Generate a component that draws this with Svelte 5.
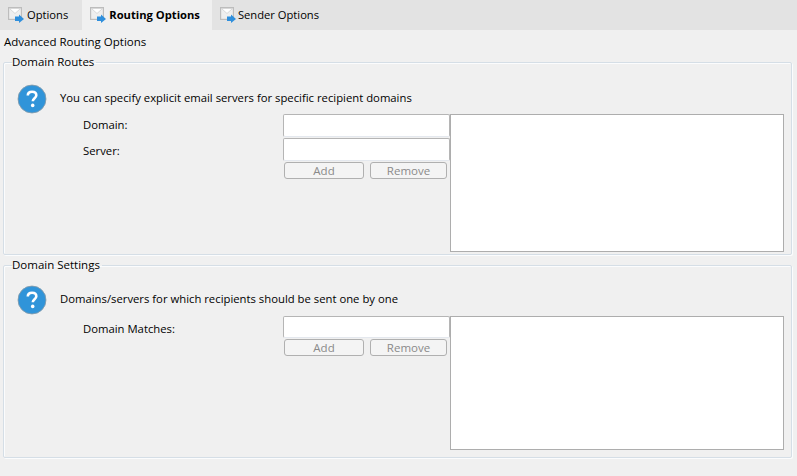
<script>
  const tabs = [
    { label: 'Options', active: false },
    { label: 'Routing Options', active: true },
    { label: 'Sender Options', active: false },
  ];

  const groups = [
    {
      title: 'Domain Routes',
      hint: 'You can specify explicit email servers for specific recipient domains',
      fields: ['Domain:', 'Server:'],
      compact: false,
    },
    {
      title: 'Domain Settings',
      hint: 'Domains/servers for which recipients should be sent one by one',
      fields: ['Domain Matches:'],
      compact: true,
    },
  ];
</script>

<div class="page">
  <nav class="tabs">
    {#each tabs as tab}
      <div class="tab" class:active={tab.active}>
        <svg class="tab-icon" width="18" height="18" viewBox="0 0 18 18">
          <rect x="0.6" y="2.6" width="12.8" height="11.8" fill="#efefef" stroke="#bdbdbd" stroke-width="1.2" />
          <path d="M1.5 3.5 L7 8.5 L12.5 3.5 Z" fill="#ffffff" stroke="#d0d0d0" stroke-width="0.8" />
          <path d="M7 11.5 H11 V9.5 L16 14 L11 18 V16 H7 Z" fill="#2f8fdc" />
        </svg>
        <span>{tab.label}</span>
      </div>
    {/each}
  </nav>

  <div class="heading">Advanced Routing Options</div>

  {#each groups as group}
    <fieldset class="group" class:compact={group.compact}>
      <legend>{group.title}</legend>
      <div class="intro">
        <svg class="help" width="30" height="30" viewBox="0 0 30 30">
          <circle cx="15" cy="15" r="14" fill="#3094d9" stroke="#8a9aa6" stroke-width="0.8" />
          <path d="M10.8 11.6 C10.8 9 12.7 7.8 15.1 7.8 C17.6 7.8 19.3 9.2 19.3 11.3 C19.3 14.2 15.8 14.4 15.8 17.3" fill="none" stroke="#fff" stroke-width="2.6" />
          <circle cx="15.7" cy="21.4" r="1.8" fill="#fff" />
        </svg>
        <span class="hint">{group.hint}</span>
      </div>
      <div class="body">
        <div class="form">
          {#each group.fields as field}
            <div class="row">
              <label for={field}>{field}</label>
              <input id={field} type="text" />
            </div>
          {/each}
          <div class="buttons">
            <button disabled class="add">Add</button>
            <button disabled class="remove">Remove</button>
          </div>
        </div>
        <div class="list"></div>
      </div>
    </fieldset>
  {/each}
</div>

<style>
  :global(body) {
    background: #f0f0f0;
  }

  .page {
    width: 797px;
    height: 476px;
    overflow: hidden;
    background: #f0f0f0;
    font-family: "Open Sans", "Noto Sans", sans-serif;
    font-size: 11.5px;
    color: #000;
  }

  .tabs {
    display: flex;
    height: 30px;
    background: #e3e3e3;
    font-size: 11.2px;
  }

  .tab {
    display: flex;
    align-items: center;
    gap: 1px;
    height: 30px;
    padding: 0 14px 2px 8px;
    box-sizing: border-box;
  }

  .tab:last-child {
    gap: 0;
  }

  .tab.active {
    background: #f0f0f0;
    font-weight: 700;
    padding-right: 12px;
  }

  .tab-icon {
    flex: none;
  }

  .heading {
    height: 24px;
    line-height: 24px;
    padding-left: 4px;
  }

  .group {
    box-sizing: border-box;
    width: 789px;
    margin: 0 0 0 3px;
    padding: 0 0 2px;
    border: 1px solid #d5dee6;
    border-radius: 2px;
    box-shadow: 1px 1px 0 #fbfcfd, inset 1px 1px 0 #fbfcfd;
  }

  .group + .group {
    margin-top: 2px;
  }

  .group.compact {
    padding-bottom: 7px;
  }

  legend {
    margin-left: 8px;
    padding: 0 2px 0 0;
    line-height: 16px;
  }

  .intro {
    display: flex;
    align-items: center;
    gap: 13px;
    height: 30px;
    padding-left: 13px;
    margin-top: 14px;
    font-size: 11.3px;
  }

  .compact .intro {
    margin-top: 12px;
  }

  .hint {
    margin-bottom: 3px;
  }

  .help {
    flex: none;
  }

  .body {
    display: flex;
    padding-left: 79px;
    margin-top: 0;
  }

  .compact .body {
    margin-top: 1px;
  }

  .form {
    width: 367px;
  }

  .row {
    display: flex;
    height: 24px;
  }

  .compact .row {
    height: 23px;
  }

  label {
    width: 200px;
    line-height: 22px;
    font-size: 11.3px;
  }

  .row:nth-child(2) label {
    padding-top: 2px;
  }

  .compact label {
    padding-top: 2px;
  }

  input {
    box-sizing: border-box;
    width: 167px;
    height: 23px;
    border: 1px solid #b5b5b5;
    border-bottom-color: #e4e8ee;
    border-radius: 2px;
    background: #fff;
  }

  .compact input {
    height: 22px;
  }

  .buttons {
    display: flex;
    gap: 6px;
    padding-left: 201px;
  }

  button {
    box-sizing: border-box;
    height: 17px;
    padding: 0;
    border: 1px solid #b0b0b0;
    border-radius: 3px;
    background: #f4f4f4;
    color: #8a8a8a;
    font: inherit;
  }

  .add {
    width: 80px;
  }

  .remove {
    width: 77px;
  }

  .list {
    box-sizing: border-box;
    width: 334px;
    height: 138px;
    border: 1px solid #adadad;
    background: #fff;
  }

  .compact .list {
    height: 134px;
  }
</style>
